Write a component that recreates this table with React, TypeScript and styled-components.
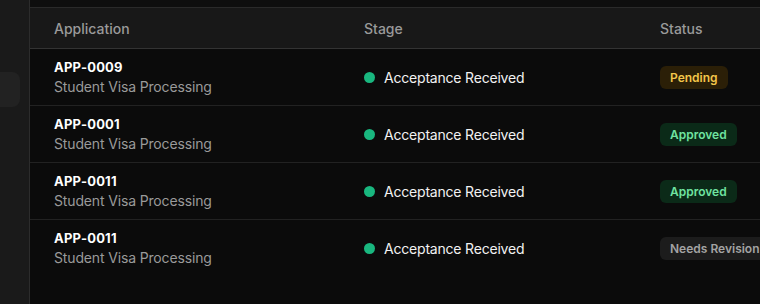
import React from 'react';
import styled, { createGlobalStyle } from 'styled-components';

const GlobalStyle = createGlobalStyle`
    html, body {
        margin: 0;
        padding: 0;
        background: #0b0b0b;
        font-family: Inter, "Noto Sans", sans-serif;
        -webkit-font-smoothing: antialiased;
    }
`;

const Page = styled.div`
    display: flex;
    width: 760px;
    height: 304px;
    overflow: hidden;
`;

const Sidebar = styled.aside`
    width: 29px;
    flex-shrink: 0;
    background: #1a1a1a;
    border-right: 1px solid #2c2c2c;
    padding-top: 72px;
    box-sizing: content-box;
`;

const NavItem = styled.div`
    width: 30px;
    height: 35px;
    margin-left: -10px;
    border-radius: 8px;
    background: #222222;
`;

const Main = styled.main`
    flex: 1;
    display: flex;
    flex-direction: column;
    background: #0b0b0b;
    min-width: 0;
`;

const TopStrip = styled.div`
    height: 7px;
    background: #0e0e0e;
    border-bottom: 1px solid #2a2a2a;
`;

const Table = styled.div`
    display: grid;
    grid-template-columns: 310px 296px 1fr;
`;

const HeadCell = styled.div`
    height: 40px;
    display: flex;
    align-items: center;
    padding-left: 24px;
    background: #181818;
    border-bottom: 1px solid #333333;
    color: #9a9a9a;
    font-size: 14px;
    font-weight: 500;
`;

const Cell = styled.div<{ $last?: boolean }>`
    height: 56px;
    display: flex;
    flex-direction: column;
    justify-content: center;
    padding-left: 24px;
    border-bottom: 1px solid ${(p) => (p.$last ? 'transparent' : '#222222')};
    white-space: nowrap;
`;

const AppId = styled.div`
    color: #ffffff;
    font-size: 13px;
    font-weight: 700;
    line-height: 19px;
    letter-spacing: 0.2px;
`;

const AppName = styled.div`
    color: #9a9a9a;
    font-size: 14px;
    line-height: 20px;
    letter-spacing: -0.15px;
`;

const Stage = styled.div`
    display: flex;
    align-items: center;
    gap: 9px;
    color: #f2f2f2;
    font-size: 14px;
    letter-spacing: -0.2px;
`;

const Dot = styled.span`
    width: 11px;
    height: 11px;
    border-radius: 50%;
    background: #19b77f;
`;

type Tone = 'pending' | 'approved' | 'revision';

const toneColors: Record<Tone, { bg: string; fg: string }> = {
    pending: { bg: '#2b1f07', fg: '#f3c64a' },
    approved: { bg: '#0b2a18', fg: '#6fe3a0' },
    revision: { bg: '#1c1c1c', fg: '#a3a3a3' },
};

const Badge = styled.span<{ $tone: Tone }>`
    align-self: flex-start;
    display: inline-flex;
    align-items: center;
    height: 23px;
    padding: 0 10px;
    border-radius: 6px;
    font-size: 12px;
    font-weight: 600;
    background: ${(p) => toneColors[p.$tone].bg};
    color: ${(p) => toneColors[p.$tone].fg};
`;

const rows: { id: string; status: string; tone: Tone }[] = [
    { id: 'APP-0009', status: 'Pending', tone: 'pending' },
    { id: 'APP-0001', status: 'Approved', tone: 'approved' },
    { id: 'APP-0011', status: 'Approved', tone: 'approved' },
    { id: 'APP-0011', status: 'Needs Revision', tone: 'revision' },
];

export default function App() {
    return (
        <Page>
            <GlobalStyle />
            <Sidebar>
                <NavItem />
            </Sidebar>
            <Main>
                <TopStrip />
                <Table>
                    <HeadCell>Application</HeadCell>
                    <HeadCell>Stage</HeadCell>
                    <HeadCell>Status</HeadCell>
                    {rows.map((r, i) => {
                        const last = i === rows.length - 1;
                        return (
                            <React.Fragment key={i}>
                                <Cell $last={last}>
                                    <AppId>{r.id}</AppId>
                                    <AppName>Student Visa Processing</AppName>
                                </Cell>
                                <Cell $last={last}>
                                    <Stage>
                                        <Dot />
                                        Acceptance Received
                                    </Stage>
                                </Cell>
                                <Cell $last={last}>
                                    <Badge $tone={r.tone}>{r.status}</Badge>
                                </Cell>
                            </React.Fragment>
                        );
                    })}
                </Table>
            </Main>
        </Page>
    );
}
